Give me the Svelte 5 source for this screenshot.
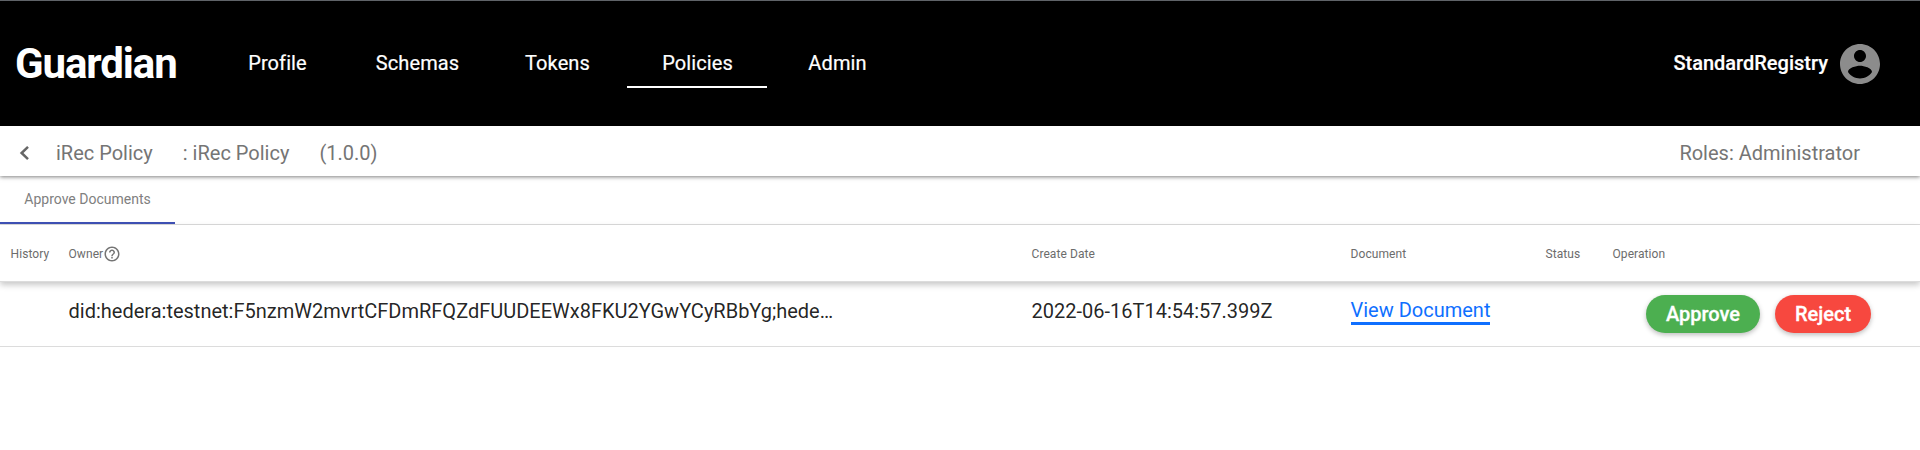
<script>
  const links = ['Profile', 'Schemas', 'Tokens', 'Policies', 'Admin'];
  const active = 'Policies';
</script>

<div class="page">
  <header>
    <div class="logo">Guardian</div>
    <nav>
      {#each links as link}
        <a class:active={link === active}>{link}</a>
      {/each}
    </nav>
    <div class="user">
      <span>StandardRegistry</span>
      <svg width="48" height="48" viewBox="0 0 24 24" fill="#8c8c8c">
        <path d="M12 2C6.48 2 2 6.48 2 12s4.48 10 10 10 10-4.48 10-10S17.52 2 12 2zm0 3c1.66 0 3 1.34 3 3s-1.34 3-3 3-3-1.34-3-3 1.34-3 3-3zm0 14.2c-2.5 0-4.71-1.28-6-3.22.03-1.99 4-3.08 6-3.08 1.99 0 5.97 1.09 6 3.08-1.29 1.94-3.5 3.22-6 3.22z" />
      </svg>
    </div>
  </header>

  <div class="policy-bar">
    <svg width="24" height="24" viewBox="0 0 24 24">
      <path d="M16 5.8L9.6 12l6.4 6.2" fill="none" stroke="#666" stroke-width="2.5" />
    </svg>
    <span class="name">iRec Policy</span>
    <span class="topic">: iRec Policy</span>
    <span class="version">(1.0.0)</span>
    <span class="roles">Roles: Administrator</span>
  </div>

  <div class="tabs">
    <div class="tab">Approve Documents</div>
  </div>

  <div class="row head">
    <div>History</div>
    <div class="owner">
      Owner
      <svg width="18" height="18" viewBox="0 0 24 24" fill="#757575">
        <path d="M11 18h2v-2h-2v2zm1-16C6.48 2 2 6.48 2 12s4.48 10 10 10 10-4.48 10-10S17.52 2 12 2zm0 18c-4.41 0-8-3.59-8-8s3.59-8 8-8 8 3.59 8 8-3.59 8-8 8zm0-14c-2.21 0-4 1.79-4 4h2c0-1.1.9-2 2-2s2 .9 2 2c0 2-3 1.75-3 5h2c0-2.25 3-2.5 3-5 0-2.21-1.79-4-4-4z" />
      </svg>
    </div>
    <div>Create Date</div>
    <div>Document</div>
    <div>Status</div>
    <div>Operation</div>
  </div>

  <div class="row body">
    <div></div>
    <div>did:hedera:testnet:F5nzmW2mvrtCFDmRFQZdFUUDEEWx8FKU2YGwYCyRBbYg;hede…</div>
    <div>2022-06-16T14:54:57.399Z</div>
    <div><a class="view">View Document</a></div>
    <div></div>
    <div class="actions">
      <button class="approve">Approve</button>
      <button class="reject">Reject</button>
    </div>
  </div>
</div>

<style>
  :global(body) {
    margin: 0;
    background: #fff;
  }
  .page {
    height: 450px;
    overflow: hidden;
    font-family: Roboto, sans-serif;
    font-size: 20px;
    color: rgba(0, 0, 0, 0.87);
  }
  header {
    box-sizing: border-box;
    height: 126px;
    border-top: 1px solid #5f6368;
    background: #000;
    color: #fff;
    display: flex;
    align-items: center;
  }
  .logo {
    box-sizing: border-box;
    width: 207px;
    padding-left: 15px;
    font-size: 42px;
    font-weight: 700;
    letter-spacing: -1.1px;
  }
  nav {
    display: flex;
  }
  nav a {
    box-sizing: border-box;
    width: 140px;
    height: 49px;
    line-height: 48px;
    padding-left: 1px;
    text-align: center;
    border-bottom: 2px solid transparent;
    font-weight: 400;
    letter-spacing: 0.1px;
    -webkit-text-stroke: 0.2px #fff;
  }
  nav a.active {
    border-bottom-color: #fff;
  }
  .user {
    margin-left: auto;
    padding-right: 36px;
    display: flex;
    align-items: center;
    gap: 8px;
    font-weight: 500;
  }
  .user span {
    padding-bottom: 2px;
    -webkit-text-stroke: 0.2px #fff;
  }
  .policy-bar {
    position: relative;
    box-sizing: border-box;
    height: 50px;
    padding: 4px 60px 0 12px;
    display: flex;
    align-items: center;
    color: #757575;
    box-shadow: 0 1px 4px rgba(0, 0, 0, 0.5);
    clip-path: inset(0 0 -8px 0);
  }
  .name {
    margin-left: 20px;
  }
  .topic,
  .version {
    margin-left: 30px;
  }
  .roles {
    margin-left: auto;
  }
  .tabs {
    box-sizing: border-box;
    height: 49px;
    border-bottom: 1px solid #dcdcdc;
  }
  .tab {
    box-sizing: border-box;
    width: 175px;
    height: 48px;
    line-height: 46px;
    border-bottom: 2px solid #3f51b5;
    text-align: center;
    font-size: 14px;
    color: #808080;
  }
  .row {
    box-sizing: border-box;
    display: grid;
    grid-template-columns: 58px 963px 319px 195px 67px 1fr;
    align-items: center;
    padding-left: 10.5px;
    white-space: nowrap;
  }
  .head {
    position: relative;
    height: 57px;
    padding-top: 2px;
    border-bottom: 1px solid #dcdcdc;
    font-size: 12px;
    font-weight: 400;
    letter-spacing: 0.08px;
    color: #6c6c6c;
    box-shadow: 0 3px 6px rgba(0, 0, 0, 0.22);
  }
  .owner {
    display: flex;
    align-items: center;
  }
  .body {
    height: 65px;
    border-bottom: 1px solid #dcdcdc;
    padding-bottom: 6px;
  }
  .view {
    display: inline-block;
    line-height: 24px;
    border-bottom: 3px solid #0f6fff;
    color: #0f6fff;
  }
  .actions {
    display: flex;
    gap: 15px;
    padding: 6px 0 0 33.5px;
  }
  button {
    height: 38px;
    padding: 0;
    border: 0;
    border-radius: 19px;
    font: 500 20px Roboto, sans-serif;
    -webkit-text-stroke: 0.3px #fff;
    color: #fff;
    box-shadow: 0 2px 5px rgba(0, 0, 0, 0.26);
  }
  .approve {
    width: 114px;
    background: #4caf50;
  }
  .reject {
    width: 96px;
    background: #f7483f;
  }
</style>
